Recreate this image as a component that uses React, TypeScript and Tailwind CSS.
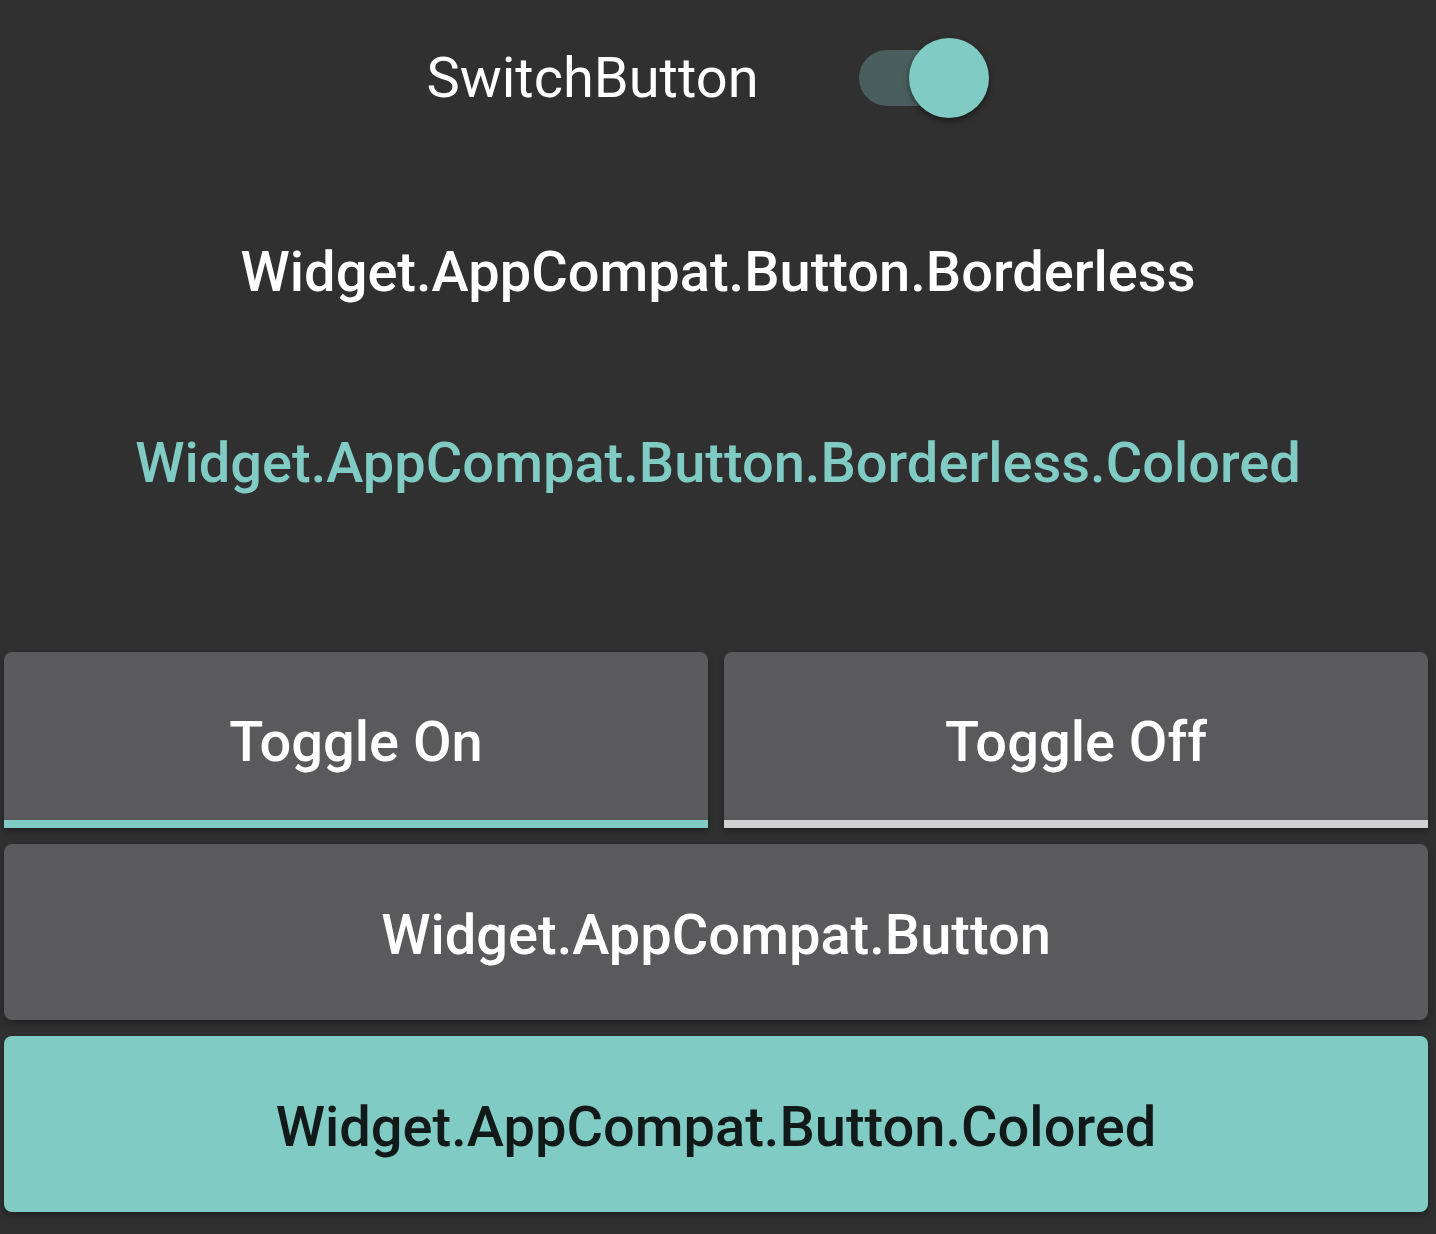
export default function App() {
  const font = { fontFamily: "Roboto, 'Noto Sans', sans-serif" };
  return (
    <div
      style={font}
      className="w-[1436px] h-[1234px] bg-[#303030] flex flex-col overflow-hidden"
    >
      {/* switch row */}
      <div className="h-[156px] flex items-center justify-center gap-[100px] pr-[21px]">
        <span className="text-[56px] text-white leading-none">SwitchButton</span>
        <div className="relative w-[130px] h-[80px] flex items-center">
          <div className="w-[118px] h-[56px] rounded-full bg-[#4a5f5d]" />
          <div className="absolute right-0 top-0 w-[80px] h-[80px] rounded-full bg-[#80cbc4] shadow-[0_3px_6px_rgba(0,0,0,0.45)]" />
        </div>
      </div>

      {/* borderless buttons */}
      <div className="h-[232px] flex items-end justify-center pb-[88px]">
        <span className="text-[56px] font-medium text-white leading-none">
          Widget.AppCompat.Button.Borderless
        </span>
      </div>
      <div className="h-[150px] flex items-center justify-center">
        <span className="text-[56px] font-medium text-[#80cbc4] leading-none">
          Widget.AppCompat.Button.Borderless.Colored
        </span>
      </div>

      {/* raised buttons */}
      <div className="mt-[114px] pl-[4px] pr-[8px] flex flex-col gap-[16px]">
        <div className="flex gap-[16px]">
          <button className="flex-1 h-[176px] rounded-t-[8px] bg-[#5a5a5c] border-b-[8px] border-[#80cbc4] shadow-[0_3px_6px_rgba(0,0,0,0.35)] flex items-center justify-center pt-[12px]">
            <span className="text-[56px] font-medium text-white leading-none">Toggle On</span>
          </button>
          <button className="flex-1 h-[176px] rounded-t-[8px] bg-[#5a5a5c] border-b-[8px] border-[#d0d0d0] shadow-[0_3px_6px_rgba(0,0,0,0.35)] flex items-center justify-center pt-[12px]">
            <span className="text-[56px] font-medium text-white leading-none">Toggle Off</span>
          </button>
        </div>
        <button className="h-[176px] rounded-[8px] bg-[#5a5a5c] shadow-[0_3px_6px_rgba(0,0,0,0.35)] flex items-center justify-center pt-[6px]">
          <span className="text-[56px] font-medium text-white leading-none">Widget.AppCompat.Button</span>
        </button>
        <button className="h-[176px] rounded-[8px] bg-[#80cbc4] shadow-[0_3px_6px_rgba(0,0,0,0.35)] flex items-center justify-center pt-[6px]">
          <span className="text-[56px] font-medium text-[#121a19] leading-none">
            Widget.AppCompat.Button.Colored
          </span>
        </button>
      </div>
    </div>
  );
}
